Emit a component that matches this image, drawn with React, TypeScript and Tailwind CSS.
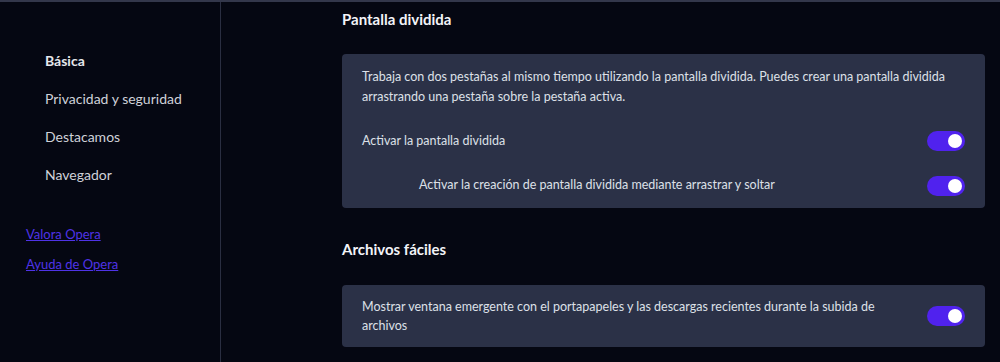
import React from 'react';

const font = { fontFamily: 'Lato, "Noto Sans", sans-serif' };

function Toggle() {
  return (
    <span className="flex h-[20px] w-[38px] shrink-0 items-center justify-end rounded-full bg-[#5022ee] pr-[3px]">
      <span className="h-[14px] w-[14px] rounded-full bg-white" />
    </span>
  );
}

const nav = ['Básica', 'Privacidad y seguridad', 'Destacamos', 'Navegador'];

export default function App() {
  return (
    <div
      className="flex h-[362px] w-full overflow-hidden border-t-2 border-[#33374b] bg-[#050712]"
      style={font}
    >
      <aside className="w-[221px] shrink-0 border-r border-[#2a2e41]">
        <nav className="flex flex-col gap-[18px] pl-[45px] pt-[49px]">
          {nav.map((item, i) => (
            <span
              key={item}
              className={
                'text-[14px] leading-[20px] ' +
                (i === 0 ? 'font-bold text-[#e6e7ec]' : 'text-[#cfd1d9]')
              }
            >
              {item}
            </span>
          ))}
        </nav>
        <div className="mt-[40px] flex flex-col gap-[12px] pl-[26px]">
          <a href="#" className="text-[13px] leading-[18px] text-[#4f33e6] underline">
            Valora Opera
          </a>
          <a href="#" className="text-[13px] leading-[18px] text-[#4f33e6] underline">
            Ayuda de Opera
          </a>
        </div>
      </aside>

      <main className="flex-1 pl-[121px] pr-[15px] pt-[6px]">
        <h2 className="text-[15px] font-bold leading-[22px] text-[#f3f4f8]">Pantalla dividida</h2>
        <section className="mt-[24px] rounded-[4px] bg-[#2b3147] px-[20px] text-[12.5px] text-[#dde0e8]">
          <p className="pb-[12px] pt-[13px] leading-[20px]">
            Trabaja con dos pestañas al mismo tiempo utilizando la pantalla dividida. Puedes crear una
            pantalla dividida arrastrando una pestaña sobre la pestaña activa.
          </p>
          <div className="flex h-[44px] items-center justify-between">
            <span>Activar la pantalla dividida</span>
            <Toggle />
          </div>
          <div className="flex h-[45px] items-center justify-between pl-[57px]">
            <span>Activar la creación de pantalla dividida mediante arrastrar y soltar</span>
            <Toggle />
          </div>
        </section>

        <h2 className="mt-[30px] text-[15px] font-bold leading-[22px] text-[#f3f4f8]">
          Archivos fáciles
        </h2>
        <section className="mt-[25px] flex items-center justify-between gap-[40px] rounded-[4px] bg-[#2b3147] px-[20px] pb-[12px] pt-[12px] text-[12.5px] text-[#dde0e8]">
          <p className="max-w-[530px] leading-[19px]">
            Mostrar ventana emergente con el portapapeles y las descargas recientes durante la subida
            de archivos
          </p>
          <Toggle />
        </section>
      </main>
    </div>
  );
}
